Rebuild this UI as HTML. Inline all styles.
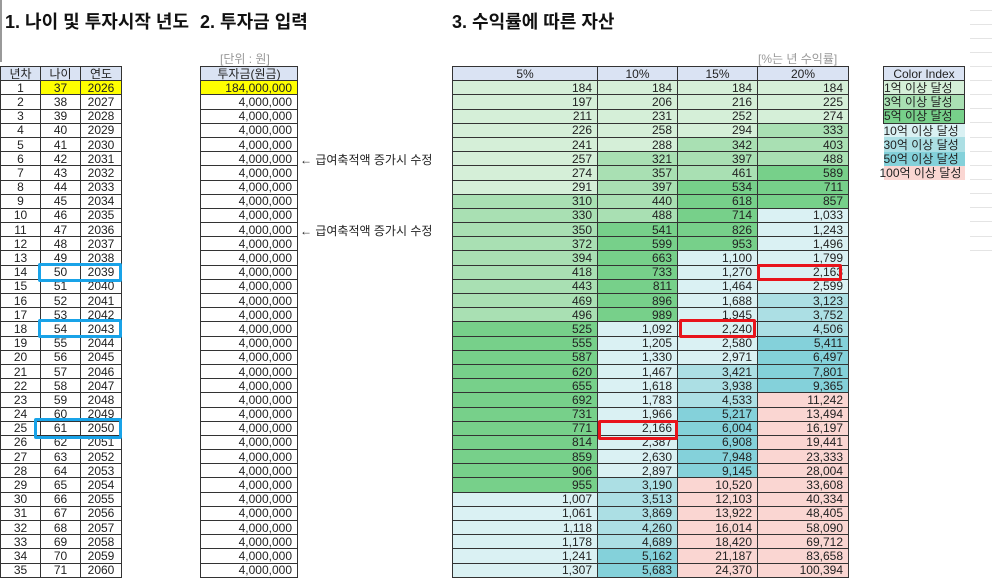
<!DOCTYPE html>
<html><head><meta charset="utf-8">
<style>
*{margin:0;padding:0;box-sizing:border-box}
body{width:992px;height:577px;background:#fff;position:relative;overflow:hidden;font-family:"Liberation Sans","Noto Sans CJK KR",sans-serif;color:#222}
.t{position:absolute;font-weight:bold;font-size:18px;top:8px;font-family:"Liberation Sans","Noto Sans CJK KR",sans-serif;color:#111}
table{position:absolute;border-collapse:collapse;font-size:12px;table-layout:fixed}
td{height:14.2px;line-height:12px;padding:0;border:1px solid #333;white-space:nowrap;overflow:visible}
.c td{text-align:center}
.r td{text-align:right;padding-right:5px}
.h td{background:#dae3f3;text-align:center;padding-right:0}
.y{background:#ffff00}
.a{background:#d5efd8}.b{background:#a9e0b3}.c1{background:#77d08a}
.d{background:#daf1f3}.e{background:#acdfe4}.f{background:#84d1da}.g{background:#fad6d2}
.gray{position:absolute;color:#999;font-size:12px;top:50px}
.note{position:absolute;left:300px;font-size:12px;color:#222}
.box{position:absolute;border:3px solid;border-radius:2px}
.blue{border-color:#19a3e8}.red{border-color:#e8141b}
.gl{position:absolute;left:970px;width:22px;height:1px;background:#e4e4e4}
</style></head><body>
<div style="position:absolute;left:0;top:0;width:2px;height:62px;background:#999"></div>
<div class="t" style="left:5px">1. 나이 및 투자시작 년도</div>
<div class="t" style="left:200px">2. 투자금 입력</div>
<div class="t" style="left:452px">3. 수익률에 따른 자산</div>
<div class="gray" style="left:220px">[단위 : 원]</div>
<div class="gray" style="left:758px">[%는 년 수익률]</div>

<table class="c" style="left:0;top:66px;width:121px">
<colgroup><col style="width:40px"><col style="width:40px"><col style="width:41px"></colgroup>
<tr class="h"><td>년차</td><td>나이</td><td>연도</td></tr>
<tr><td>1</td><td class="y">37</td><td class="y">2026</td></tr>
<tr><td>2</td><td>38</td><td>2027</td></tr>
<tr><td>3</td><td>39</td><td>2028</td></tr>
<tr><td>4</td><td>40</td><td>2029</td></tr>
<tr><td>5</td><td>41</td><td>2030</td></tr>
<tr><td>6</td><td>42</td><td>2031</td></tr>
<tr><td>7</td><td>43</td><td>2032</td></tr>
<tr><td>8</td><td>44</td><td>2033</td></tr>
<tr><td>9</td><td>45</td><td>2034</td></tr>
<tr><td>10</td><td>46</td><td>2035</td></tr>
<tr><td>11</td><td>47</td><td>2036</td></tr>
<tr><td>12</td><td>48</td><td>2037</td></tr>
<tr><td>13</td><td>49</td><td>2038</td></tr>
<tr><td>14</td><td>50</td><td>2039</td></tr>
<tr><td>15</td><td>51</td><td>2040</td></tr>
<tr><td>16</td><td>52</td><td>2041</td></tr>
<tr><td>17</td><td>53</td><td>2042</td></tr>
<tr><td>18</td><td>54</td><td>2043</td></tr>
<tr><td>19</td><td>55</td><td>2044</td></tr>
<tr><td>20</td><td>56</td><td>2045</td></tr>
<tr><td>21</td><td>57</td><td>2046</td></tr>
<tr><td>22</td><td>58</td><td>2047</td></tr>
<tr><td>23</td><td>59</td><td>2048</td></tr>
<tr><td>24</td><td>60</td><td>2049</td></tr>
<tr><td>25</td><td>61</td><td>2050</td></tr>
<tr><td>26</td><td>62</td><td>2051</td></tr>
<tr><td>27</td><td>63</td><td>2052</td></tr>
<tr><td>28</td><td>64</td><td>2053</td></tr>
<tr><td>29</td><td>65</td><td>2054</td></tr>
<tr><td>30</td><td>66</td><td>2055</td></tr>
<tr><td>31</td><td>67</td><td>2056</td></tr>
<tr><td>32</td><td>68</td><td>2057</td></tr>
<tr><td>33</td><td>69</td><td>2058</td></tr>
<tr><td>34</td><td>70</td><td>2059</td></tr>
<tr><td>35</td><td>71</td><td>2060</td></tr>
</table>

<table class="r" style="left:200px;top:66px;width:98px;border:1px solid #777">
<tr class="h"><td>투자금(원금)</td></tr>
<tr><td class="y">184,000,000</td></tr>
<tr><td>4,000,000</td></tr><tr><td>4,000,000</td></tr><tr><td>4,000,000</td></tr><tr><td>4,000,000</td></tr>
<tr><td>4,000,000</td></tr><tr><td>4,000,000</td></tr><tr><td>4,000,000</td></tr><tr><td>4,000,000</td></tr>
<tr><td>4,000,000</td></tr><tr><td>4,000,000</td></tr><tr><td>4,000,000</td></tr><tr><td>4,000,000</td></tr>
<tr><td>4,000,000</td></tr><tr><td>4,000,000</td></tr><tr><td>4,000,000</td></tr><tr><td>4,000,000</td></tr>
<tr><td>4,000,000</td></tr><tr><td>4,000,000</td></tr><tr><td>4,000,000</td></tr><tr><td>4,000,000</td></tr>
<tr><td>4,000,000</td></tr><tr><td>4,000,000</td></tr><tr><td>4,000,000</td></tr><tr><td>4,000,000</td></tr>
<tr><td>4,000,000</td></tr><tr><td>4,000,000</td></tr><tr><td>4,000,000</td></tr><tr><td>4,000,000</td></tr>
<tr><td>4,000,000</td></tr><tr><td>4,000,000</td></tr><tr><td>4,000,000</td></tr><tr><td>4,000,000</td></tr>
<tr><td>4,000,000</td></tr><tr><td>4,000,000</td></tr>
</table>
<div class="note" style="top:151px">← 급여축적액 증가시 수정</div>
<div class="note" style="top:222px">← 급여축적액 증가시 수정</div>

<table class="r" style="left:452px;top:66px;width:396px">
<colgroup><col style="width:145px"><col style="width:80px"><col style="width:80px"><col style="width:91px"></colgroup>
<tr class="h"><td>5%</td><td>10%</td><td>15%</td><td>20%</td></tr>
<tr><td class="a">184</td><td class="a">184</td><td class="a">184</td><td class="a">184</td></tr>
<tr><td class="a">197</td><td class="a">206</td><td class="a">216</td><td class="a">225</td></tr>
<tr><td class="a">211</td><td class="a">231</td><td class="a">252</td><td class="a">274</td></tr>
<tr><td class="a">226</td><td class="a">258</td><td class="a">294</td><td class="b">333</td></tr>
<tr><td class="a">241</td><td class="a">288</td><td class="b">342</td><td class="b">403</td></tr>
<tr><td class="a">257</td><td class="b">321</td><td class="b">397</td><td class="b">488</td></tr>
<tr><td class="a">274</td><td class="b">357</td><td class="b">461</td><td class="c1">589</td></tr>
<tr><td class="a">291</td><td class="b">397</td><td class="c1">534</td><td class="c1">711</td></tr>
<tr><td class="b">310</td><td class="b">440</td><td class="c1">618</td><td class="c1">857</td></tr>
<tr><td class="b">330</td><td class="b">488</td><td class="c1">714</td><td class="d">1,033</td></tr>
<tr><td class="b">350</td><td class="c1">541</td><td class="c1">826</td><td class="d">1,243</td></tr>
<tr><td class="b">372</td><td class="c1">599</td><td class="c1">953</td><td class="d">1,496</td></tr>
<tr><td class="b">394</td><td class="c1">663</td><td class="d">1,100</td><td class="d">1,799</td></tr>
<tr><td class="b">418</td><td class="c1">733</td><td class="d">1,270</td><td class="d">2,163</td></tr>
<tr><td class="b">443</td><td class="c1">811</td><td class="d">1,464</td><td class="d">2,599</td></tr>
<tr><td class="b">469</td><td class="c1">896</td><td class="d">1,688</td><td class="e">3,123</td></tr>
<tr><td class="b">496</td><td class="c1">989</td><td class="d">1,945</td><td class="e">3,752</td></tr>
<tr><td class="c1">525</td><td class="d">1,092</td><td class="d">2,240</td><td class="e">4,506</td></tr>
<tr><td class="c1">555</td><td class="d">1,205</td><td class="d">2,580</td><td class="f">5,411</td></tr>
<tr><td class="c1">587</td><td class="d">1,330</td><td class="d">2,971</td><td class="f">6,497</td></tr>
<tr><td class="c1">620</td><td class="d">1,467</td><td class="e">3,421</td><td class="f">7,801</td></tr>
<tr><td class="c1">655</td><td class="d">1,618</td><td class="e">3,938</td><td class="f">9,365</td></tr>
<tr><td class="c1">692</td><td class="d">1,783</td><td class="e">4,533</td><td class="g">11,242</td></tr>
<tr><td class="c1">731</td><td class="d">1,966</td><td class="f">5,217</td><td class="g">13,494</td></tr>
<tr><td class="c1">771</td><td class="d">2,166</td><td class="f">6,004</td><td class="g">16,197</td></tr>
<tr><td class="c1">814</td><td class="d">2,387</td><td class="f">6,908</td><td class="g">19,441</td></tr>
<tr><td class="c1">859</td><td class="d">2,630</td><td class="f">7,948</td><td class="g">23,333</td></tr>
<tr><td class="c1">906</td><td class="d">2,897</td><td class="f">9,145</td><td class="g">28,004</td></tr>
<tr><td class="c1">955</td><td class="e">3,190</td><td class="g">10,520</td><td class="g">33,608</td></tr>
<tr><td class="d">1,007</td><td class="e">3,513</td><td class="g">12,103</td><td class="g">40,334</td></tr>
<tr><td class="d">1,061</td><td class="e">3,869</td><td class="g">13,922</td><td class="g">48,405</td></tr>
<tr><td class="d">1,118</td><td class="e">4,260</td><td class="g">16,014</td><td class="g">58,090</td></tr>
<tr><td class="d">1,178</td><td class="e">4,689</td><td class="g">18,420</td><td class="g">69,712</td></tr>
<tr><td class="d">1,241</td><td class="f">5,162</td><td class="g">21,187</td><td class="g">83,658</td></tr>
<tr><td class="d">1,307</td><td class="f">5,683</td><td class="g">24,370</td><td class="g">100,394</td></tr>
</table>

<table style="left:883px;top:66px;width:82px;font-size:12px">
<tr class="h"><td>Color Index</td></tr>
<tr><td class="a">1억 이상 달성</td></tr>
<tr><td class="b">3억 이상 달성</td></tr>
<tr><td class="c1">5억 이상 달성</td></tr>
<tr><td class="d" style="border:none">10억 이상 달성</td></tr>
<tr><td class="e" style="border:none">30억 이상 달성</td></tr>
<tr><td class="f" style="border:none">50억 이상 달성</td></tr>
<tr><td class="g" style="border:none;text-indent:-4px">100억 이상 달성</td></tr>
</table>

<div class="gl" style="top:10px"></div><div class="gl" style="top:24px"></div><div class="gl" style="top:38px"></div>
<div class="gl" style="top:52px"></div><div class="gl" style="top:66px"></div><div class="gl" style="top:80px"></div>
<div class="gl" style="top:94px"></div><div class="gl" style="top:108px"></div><div class="gl" style="top:122px"></div>
<div class="gl" style="top:137px"></div><div class="gl" style="top:151px"></div><div class="gl" style="top:165px"></div>
<div class="gl" style="top:179px"></div><div class="gl" style="top:193px"></div><div class="gl" style="top:207px"></div>
<div class="gl" style="top:221px"></div><div class="gl" style="top:236px"></div><div class="gl" style="top:250px"></div>

<div class="box blue" style="left:38px;top:263px;width:84px;height:19px"></div>
<div class="box blue" style="left:38px;top:319px;width:84px;height:19px"></div>
<div class="box blue" style="left:34px;top:418px;width:88px;height:21px"></div>
<div class="box red" style="left:757px;top:264px;width:85px;height:17px"></div>
<div class="box red" style="left:679px;top:319px;width:77px;height:19px"></div>
<div class="box red" style="left:598px;top:420px;width:80px;height:20px"></div>
</body></html>
